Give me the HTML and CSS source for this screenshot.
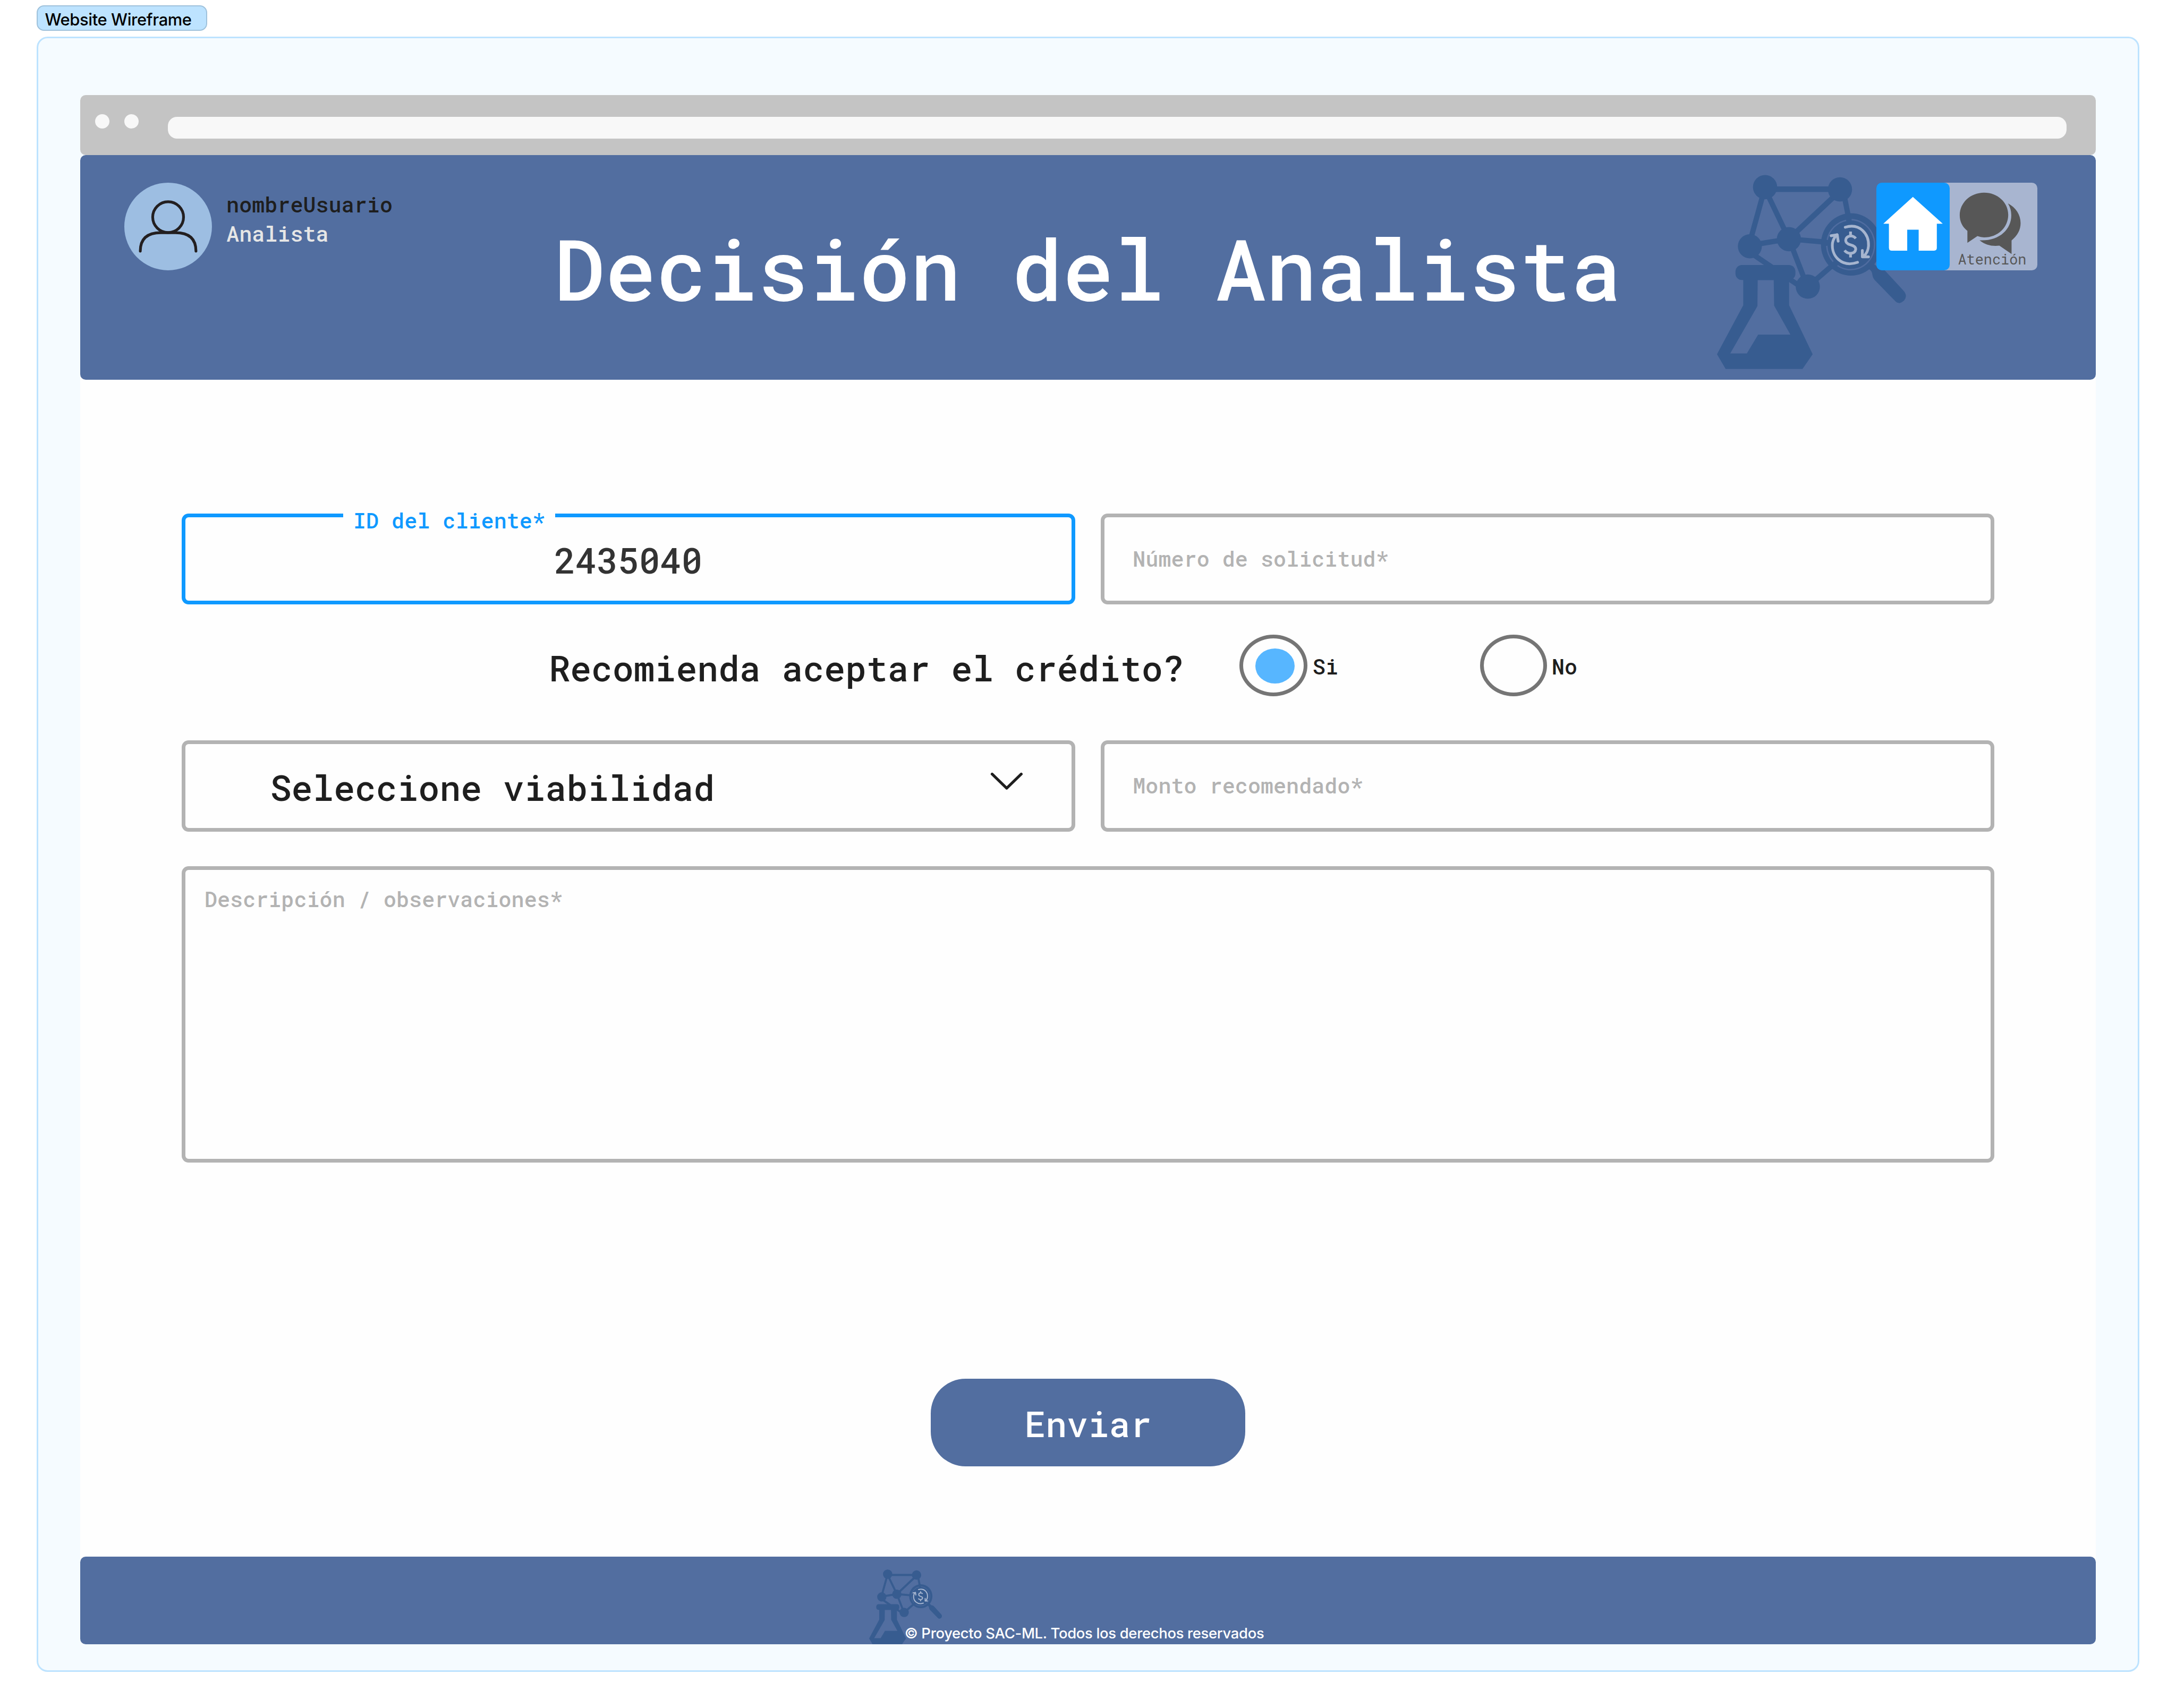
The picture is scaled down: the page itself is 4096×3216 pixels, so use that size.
FILE: index.html
```html
<!DOCTYPE html>
<html lang="es">
<head>
<meta charset="utf-8">
<title>Decisión del Analista</title>
<link rel="stylesheet" href="styles.css">
</head>
<body>
<svg class="defs" aria-hidden="true">
  <symbol id="logo" viewBox="62 43 415 424" preserveAspectRatio="none">
    <g fill="#375c90" stroke="none">
      <g stroke="#375c90" fill="none">
        <path stroke-width="12" d="M167 74.500H331M331 79L225 178"/>
        <path stroke-width="11.500" d="M164 82L134 190M171 82L219.600 183L260 287M341 90L353 150M134 197L219.600 183L302 190M134 212L245 287M261 287L325 232"/>
      </g>
      <circle cx="167.300" cy="70" r="26.500"/>
      <circle cx="331.500" cy="75" r="26.500"/>
      <circle cx="134" cy="199" r="26.300"/>
      <circle cx="219.600" cy="183.500" r="26.500"/>
      <circle cx="261" cy="287" r="26.500"/>
      <ellipse cx="355.700" cy="195" rx="66" ry="68"/>
      <path d="M405 237L416 246Q425 246 429 251L469 294Q476 301 476 308Q475 319 462 323Q456 323 451 317L407 272Q403 267 402 258Q401 252 394 248Z"/>
      <rect x="102.500" y="239.800" width="131.300" height="32.800" rx="14"/>
      <path fill-rule="evenodd" d="M119.500 262H220V327.700L271.600 434.500L249.300 466.500H81L62 434.500L119.500 327.700ZM151.200 272.600L150.600 329.400L91 432.800H127.400L152.200 391.700H222.800L187.200 328.400L186.300 272.600Z"/>
    </g>
    <g fill="none" stroke="#4f6ca0" stroke-width="3">
      <path d="M357 141A52.500 54.500 0 1 1 326 241M316.500 232.500A53 55 0 0 1 302.500 198M303.500 185A53 55 0 0 1 345 142.500"/>
    </g>
    <g fill="none" stroke="#a6b5cf" stroke-width="6" stroke-linecap="round" stroke-linejoin="round">
      <path d="M343 157.500C375 148 395 172 394 198Q393 212 384 220"/>
      <path d="M380.500 208V222H394"/>
      <path d="M370 234C336 246 312 221 315 192Q317 181 325 174"/>
      <path d="M312 176L325.500 174L327.500 188"/>
      <path stroke-linecap="butt" d="M354.600 167V177M354.600 215V223.500"/>
      <path stroke-linecap="butt" d="M366 182Q362 176.500 354.600 176.500Q344 178 344 186Q344 193 354.600 196Q366 199 366 205.500Q365 214 354.600 214.500Q346 214 341.500 208"/>
    </g>
  </symbol>
</svg>

<div class="tag">Website Wireframe</div>
<div class="frame">
  <div class="browser">
    <div class="chrome">
      <span class="dot"></span><span class="dot"></span>
      <span class="address"></span>
    </div>
    <header class="header">
      <div class="user">
        <svg class="avatar" viewBox="0 0 192 192">
          <circle cx="96" cy="96" r="96" fill="#9dbee2"/>
          <g fill="none" stroke="#231f20" stroke-width="6" stroke-linecap="round">
            <circle cx="96" cy="75.500" r="33.800"/>
            <path d="M35 150C35 123 50 109.500 80 109.500H112C142 109.500 157 123 157 150"/>
          </g>
        </svg>
        <div class="who">
          <div class="name">nombreUsuario</div>
          <div class="role">Analista</div>
        </div>
      </div>
      <h1 class="title">Decisión del Analista</h1>
      <svg class="logo"><use href="#logo"/></svg>
      <nav class="nav">
        <a class="home">
          <svg viewBox="0 0 160 192"><path fill="#fff" d="M80 31L145.500 90H132.500V143Q132.500 149 126.500 149H92.700V103H67.600V149H33.500Q27.500 149 27.500 143V90H15.200Z"/></svg>
        </a>
        <a class="help">
          <svg viewBox="572 59.700 192 191" preserveAspectRatio="none" fill="#575757">
            <path d="M610.800 165.200C600 157 594 145 594 131C594 104 617 81.500 647.300 81.500C677 81.500 700.300 103 700.300 130C700.300 157 678 179.500 647.300 179.500Q640 179.500 632.800 176.800L610.800 191.400Z"/>
            <path d="M699.700 105.100C717 114 727.400 130 727.400 148.300C727.400 164 720 176 707.600 186.400V215.900L680.900 197.700C665 199.500 650 196.500 637.500 186C680 188 707 163 707 131Q707 117 699.700 105.100Z"/>
          </svg>
          <span class="help-label">Atención</span>
        </a>
      </nav>
    </header>

    <main class="form">
      <div class="row">
        <div class="field active"><span class="legend">ID del cliente*</span><span class="value">2435040</span></div>
        <div class="field"><span class="placeholder">Número de solicitud*</span></div>
      </div>
      <div class="question">
        <span class="question-text">Recomienda aceptar el crédito?</span>
        <span class="radio checked"></span><span class="radio-label">Si</span>
        <span class="radio second"></span><span class="radio-label">No</span>
      </div>
      <div class="row">
        <div class="field select">
          <span class="selected">Seleccione viabilidad</span>
          <svg class="chevron" viewBox="0 0 72 40"><path d="M4 4L36 35L68 4" fill="none" stroke="#1e1e1e" stroke-width="6" stroke-linecap="round" stroke-linejoin="round"/></svg>
        </div>
        <div class="field"><span class="placeholder">Monto recomendado*</span></div>
      </div>
      <div class="area"><span>Descripción / observaciones*</span></div>
      <div class="send">Enviar</div>
    </main>

    <footer class="footer">
      <svg class="footer-logo"><use href="#logo"/></svg>
      <span class="copy">© Proyecto SAC-ML. Todos los derechos reservados</span>
    </footer>
  </div>
</div>
</body>
</html>
```

FILE: styles.css
```css
/* 1rem is 100 design pixels; the 4768px wide design fills the window */
html {
  font-size: calc(100vw / 47.68);
}

* {
  box-sizing: border-box;
}

body {
  margin: 0;
  padding: 0.12rem 0.8rem 0;
  height: 37.44rem;
  overflow: hidden;
  background: #fff;
  color: #1e1e1e;
  font-family: "Roboto Mono", "DejaVu Sans Mono", monospace;
  font-size: 0.467rem;
  font-weight: 500;
  white-space: nowrap;
}

svg {
  display: block;
}

.defs {
  position: absolute;
  width: 0;
  height: 0;
}

.tag {
  width: 3.74rem;
  height: 0.56rem;
  padding-left: 0.16rem;
  border: 0.024rem solid #9ec1db;
  border-radius: 0.16rem;
  background: #bde3ff;
  color: #000;
  font: 500 0.36rem/0.59rem Inter, sans-serif;
  letter-spacing: -0.0125em;
}

.frame {
  width: 46.08rem;
  height: 35.84rem;
  margin-top: 0.12rem;
  padding: 1.247rem 0.925rem 0;
  border: 0.04rem solid #bde3ff;
  border-radius: 0.24rem;
  background: #f5fbff;
}

.browser {
  border-radius: 0.12rem;
  background: linear-gradient(#f5fbff 1.6rem, #fefefe 1.6rem);
}

.chrome {
  display: flex;
  align-items: flex-start;
  gap: 0.32rem;
  height: 1.32rem;
  padding: 0.42rem 0.64rem 0 0.32rem;
  border-radius: 0.12rem;
  background: #c4c4c4;
}

.dot {
  width: 0.32rem;
  height: 0.32rem;
  border-radius: 50%;
  background: #f8f8f8;
}

.address {
  flex: 1;
  height: 0.48rem;
  margin: 0.06rem 0 0 0.32rem;
  border-radius: 0.2rem;
  background: #f8f8f8;
}

.header {
  position: relative;
  display: grid;
  grid-template-columns: 1fr auto 1fr;
  height: 4.92rem;
  border-radius: 0.12rem;
  background: #526ea0;
}

.user {
  display: flex;
  gap: 0.32rem;
  padding: 0.6rem 0 0 0.96rem;
}

.avatar {
  width: 1.92rem;
  height: 1.92rem;
}

.who {
  padding-top: 0.166rem;
  line-height: 0.64rem;
}

.role {
  color: #e6e6e6;
}

.title {
  margin: 1.475rem 0 0;
  color: #fff;
  font-size: 1.856rem;
  font-weight: 500;
  line-height: 2rem;
}

/* watermark that runs under the navigation buttons */
.logo {
  position: absolute;
  left: 35.86rem;
  top: 0.432rem;
  width: 4.15rem;
  height: 4.262rem;
}

.nav {
  position: relative;
  display: flex;
  justify-self: end;
  height: 1.92rem;
  margin: 0.6rem 1.28rem 0 0;
}

.home {
  z-index: 1;
  width: 1.6rem;
  border-radius: 0.12rem;
  background: #0f99ff;
}

.help {
  position: relative;
  width: 2.22rem;
  margin-left: -0.3rem;
  padding-left: 0.3rem;
  border-radius: 0.12rem;
  background: #a8b5d0;
}

.help-label {
  position: absolute;
  left: 0.48rem;
  top: 1.485rem;
  color: #575757;
  font-size: 0.313rem;
  font-weight: 400;
  line-height: 0.4rem;
}

.form {
  height: 25.8rem;
  padding: 2.93rem 2.22rem 0;
}

.row {
  display: grid;
  grid-template-columns: 1fr 1fr;
  gap: 0.56rem;
}

.field,
.area {
  border: 0.082rem solid #b3b3b3;
  border-radius: 0.15rem;
  color: #b3b3b3;
}

.field {
  position: relative;
  display: flex;
  align-items: center;
  height: 2rem;
  padding-left: 0.62rem;
}

.placeholder {
  padding-bottom: 0.02rem;
}

.active {
  justify-content: center;
  padding: 0;
  border-color: #0f99ff;
}

.legend {
  position: absolute;
  left: 3.46rem;
  top: -0.235rem;
  width: 4.64rem;
  background: #fefefe;
  color: #0f99ff;
  line-height: 0.64rem;
  text-align: center;
}

.value {
  padding-top: 0.041rem;
  color: #333;
  font-size: 0.773rem;
}

.question {
  display: flex;
  align-items: center;
  height: 2.975rem;
  padding: 0 0 0.305rem 8.05rem;
}

.question-text {
  margin-right: 1.21rem;
  padding-top: 0.09rem;
  font-size: 0.773rem;
}

.radio {
  width: 1.5rem;
  height: 1.36rem;
  margin-right: 0.11rem;
  padding: 0.22rem 0 0 0.27rem;
  border: 0.082rem solid #757575;
  border-radius: 50%;
}

.checked::before {
  content: "";
  display: block;
  width: 0.86rem;
  height: 0.77rem;
  border-radius: 50%;
  background: #57b6ff;
}

.second {
  width: 1.47rem;
  margin: 0 0.1rem 0 3.11rem;
}

.radio-label {
  padding-top: 0.03rem;
}

.select {
  justify-content: space-between;
  padding: 0 1.06rem 0 1.86rem;
}

.selected {
  padding-top: 0.051rem;
  color: #1e1e1e;
  font-size: 0.773rem;
}

.chevron {
  width: 0.72rem;
  height: 0.4rem;
  margin-bottom: 0.2rem;
}

.area {
  height: 6.5rem;
  margin-top: 0.755rem;
  padding: 0.33rem 0.42rem;
  line-height: 0.64rem;
}

.send {
  width: 6.88rem;
  height: 1.92rem;
  margin: 4.74rem auto 0;
  border-radius: 0.76rem;
  background: #526ea0;
  color: #fff;
  font-size: 0.773rem;
  line-height: 1.974rem;
  text-align: center;
}

.footer {
  position: relative;
  height: 1.92rem;
  padding: 1.48rem 0 0 18.06rem;
  border-radius: 0.12rem;
  background: #526ea0;
  color: #fff;
  font: 500 0.32rem/0.4rem Inter, sans-serif;
  letter-spacing: -0.0125em;
}

.footer-logo {
  position: absolute;
  left: 17.28rem;
  top: 0.28rem;
  width: 1.6rem;
  height: 1.64rem;
}

.copy {
  position: relative;
}
```
